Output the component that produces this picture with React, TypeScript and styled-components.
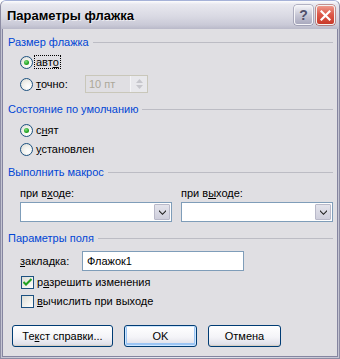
import React from 'react';
import styled, { createGlobalStyle } from 'styled-components';

const Global = createGlobalStyle`
  html, body {
    margin: 0;
    padding: 0;
    background: #ffffff;
  }
  body {
    font-family: "Liberation Sans", Arial, sans-serif;
    font-size: 11px;
    color: #000000;
  }
`;

const Window = styled.div`
  width: 340px;
  height: 359px;
  box-sizing: border-box;
  display: flex;
  flex-direction: column;
  background: linear-gradient(90deg, #c4c4d2 0%, #e6e6ee 40%, #e6e6ee 60%, #c4c4d2 100%);
  border: 1px solid #8d8da4;
  border-top-color: #a6b2d8;
  border-radius: 6px 6px 0 0;
  overflow: hidden;
`;

const TitleBar = styled.div`
  height: 28px;
  flex: none;
  display: flex;
  align-items: center;
  padding: 0 4px 0 6px;
  background: linear-gradient(180deg, #fdfdfe 0%, #e8e8ef 12%, #d9d9e3 55%, #cacad7 85%, #b9b9c9 100%);
`;

const Title = styled.div`
  flex: 1;
  font-family: "Liberation Sans", Arial, sans-serif;
  font-weight: bold;
  font-size: 13px;
  color: #000000;
  text-shadow: 1px 1px 0 rgba(255, 255, 255, 0.6);
  padding-top: 1px;
`;

const CaptionButton = styled.div<{ $kind: 'help' | 'close' }>`
  width: 19px;
  height: 20px;
  box-sizing: border-box;
  margin-left: 3px;
  border-radius: 3px;
  display: flex;
  align-items: center;
  justify-content: center;
  border: 1px solid ${(p) => (p.$kind === 'close' ? '#f3f3f3' : '#f6f6f9')};
  box-shadow: 0 0 0 0.5px ${(p) => (p.$kind === 'close' ? '#9a3a30' : '#7c7c96')};
  background: ${(p) =>
    p.$kind === 'close'
      ? 'linear-gradient(180deg, #ee9a8c 0%, #dd5a4a 45%, #c93a2a 100%)'
      : 'linear-gradient(180deg, #f2f2f6 0%, #c8c8d6 50%, #a9a9be 100%)'};
  color: ${(p) => (p.$kind === 'close' ? '#ffffff' : '#50506a')};
  font-weight: bold;
  font-size: 14px;
`;

const Client = styled.div`
  flex: 1;
  margin: 0 1px 1px 1px;
  border: 1px solid #8585a0;
  border-top: none;
  background: #e0dfe3;
  display: flex;
  flex-direction: column;
  padding: 6px 4px 0 5px;
`;

const GroupHeader = styled.div<{ $gap: number }>`
  height: 14px;
  margin-top: ${(p) => p.$gap}px;
  display: flex;
  align-items: center;
  gap: 4px;
  color: #0046d5;
  white-space: nowrap;
  &::after {
    content: '';
    flex: 1;
    height: 1px;
    background: #bcbcc4;
  }
`;

const Row = styled.div<{ $gap: number; $h?: number; $indent?: number }>`
  height: ${(p) => p.$h ?? 14}px;
  margin-top: ${(p) => p.$gap}px;
  padding-left: ${(p) => p.$indent ?? 0}px;
  display: flex;
  align-items: center;
  white-space: nowrap;
`;

const FixedLabel = styled.span<{ $w: number }>`
  width: ${(p) => p.$w}px;
  flex: none;
`;

const Radio = styled.span<{ $on?: boolean }>`
  width: 13px;
  height: 13px;
  box-sizing: border-box;
  border-radius: 50%;
  border: 1px solid #1c5180;
  background: radial-gradient(circle at 65% 70%, #ffffff 0%, #f2f2ee 45%, #d8d8d0 100%);
  display: flex;
  align-items: center;
  justify-content: center;
  margin-right: 3px;
  flex: none;
  &::after {
    content: '';
    display: ${(p) => (p.$on ? 'block' : 'none')};
    width: 5px;
    height: 5px;
    border-radius: 50%;
    background: radial-gradient(circle at 40% 35%, #7fe27f 0%, #21a121 60%, #1a8a1a 100%);
  }
`;

const Check = styled.span`
  width: 13px;
  height: 13px;
  box-sizing: border-box;
  border: 1px solid #1c5180;
  background: linear-gradient(135deg, #dcdcd6 0%, #f2f2ee 60%, #ffffff 100%);
  display: flex;
  align-items: center;
  justify-content: center;
  margin-right: 3px;
  flex: none;
`;

const Focus = styled.span`
  outline: 1px dotted #000000;
  outline-offset: 0px;
  padding: 0 1px;
  margin-left: -1px;
`;

const U = styled.span`
  text-decoration: underline;
  text-underline-offset: 1px;
`;

const Spinner = styled.div`
  width: 63px;
  height: 18px;
  box-sizing: border-box;
  border: 1px solid #c9c7ba;
  background: #e0dfe3;
  color: #aca899;
  display: flex;
  align-items: center;
  padding-left: 3px;
`;

const SpinValue = styled.span`
  flex: 1;
`;

const SpinButtons = styled.div`
  width: 16px;
  height: 100%;
  display: flex;
  flex-direction: column;
  align-items: center;
  justify-content: center;
  gap: 2px;
  background: #e8e8ec;
  border-left: 1px solid #f4f4f6;
`;

const Columns = styled.div<{ $gap: number }>`
  display: grid;
  grid-template-columns: 152px 152px;
  column-gap: 9px;
  margin-top: ${(p) => p.$gap}px;
  padding-left: 12px;
`;

const Field = styled.div`
  display: flex;
  flex-direction: column;
  gap: 2px;
`;

const Label = styled.div`
  height: 14px;
  display: flex;
  align-items: center;
  white-space: nowrap;
`;

const Combo = styled.div`
  height: 20px;
  box-sizing: border-box;
  border: 1px solid #7f9db9;
  background: #ffffff;
  display: flex;
  justify-content: flex-end;
  padding: 1px;
`;

const ComboButton = styled.div`
  width: 16px;
  box-sizing: border-box;
  border: 1px solid #b9b9c9;
  border-radius: 1px;
  background: linear-gradient(180deg, #e4e4ec 0%, #cfcfdc 100%);
  display: flex;
  align-items: center;
  justify-content: center;
`;

const TextInput = styled.div`
  width: 162px;
  height: 20px;
  box-sizing: border-box;
  border: 1px solid #7f9db9;
  background: #ffffff;
  padding-left: 4px;
  display: flex;
  align-items: center;
`;

const ButtonBar = styled.div`
  display: flex;
  align-items: center;
  margin-top: 17px;
  padding-left: 4px;
`;

const Button = styled.div<{ $w: number; $default?: boolean }>`
  width: ${(p) => p.$w}px;
  height: 22px;
  box-sizing: border-box;
  border: 1px solid #003c74;
  border-radius: 3px;
  background: linear-gradient(180deg, #ffffff 0%, #f4f4f8 55%, #e2e2ea 90%, #d2d2dc 100%);
  box-shadow: ${(p) =>
    p.$default ? 'inset 0 0 0 1px #cee7ff, inset 0 -1px 0 2px #9cc5f4' : 'inset 0 -1px 0 0 #d6d0c5'};
  display: flex;
  align-items: center;
  justify-content: center;
  white-space: nowrap;
  margin-left: ${(p) => (p.$default ? 'auto' : '0')};
  & + & {
    margin-left: 11px;
  }
`;

const Chevron = ({ color = '#222222' }: { color?: string }) => (
  <svg width="7" height="5" viewBox="0 0 7 5">
    <path d="M0 0 L3.5 3.5 L7 0 L7 1.5 L3.5 5 L0 1.5 Z" fill={color} />
  </svg>
);

export default function App() {
  return (
    <>
      <Global />
      <Window>
        <TitleBar>
          <Title>Параметры флажка</Title>
          <CaptionButton $kind="help">?</CaptionButton>
          <CaptionButton $kind="close">
            <svg width="11" height="11" viewBox="0 0 11 11">
              <path d="M1.5 1.5 L9.5 9.5 M9.5 1.5 L1.5 9.5" stroke="#ffffff" strokeWidth="2.2" strokeLinecap="square" />
            </svg>
          </CaptionButton>
        </TitleBar>
        <Client>
          <GroupHeader $gap={0}>Размер флажка</GroupHeader>
          <Row $gap={6} $indent={12}>
            <Radio $on />
            <Focus>
              авт<U>о</U>
            </Focus>
          </Row>
          <Row $gap={6} $h={18} $indent={12}>
            <Radio />
            <FixedLabel $w={49}>
              <U>т</U>очно:
            </FixedLabel>
            <Spinner>
              <SpinValue>10 пт</SpinValue>
              <SpinButtons>
                <svg width="7" height="4" viewBox="0 0 7 4">
                  <path d="M0 4 L3.5 0 L7 4 Z" fill="#c6c6cc" />
                </svg>
                <svg width="7" height="4" viewBox="0 0 7 4">
                  <path d="M0 0 L3.5 4 L7 0 Z" fill="#c6c6cc" />
                </svg>
              </SpinButtons>
            </Spinner>
          </Row>
          <GroupHeader $gap={9}>Состояние по умолчанию</GroupHeader>
          <Row $gap={7} $indent={12}>
            <Radio $on />
            <span>
              с<U>н</U>ят
            </span>
          </Row>
          <Row $gap={5} $indent={12}>
            <Radio />
            <span>
              <U>у</U>становлен
            </span>
          </Row>
          <GroupHeader $gap={9}>Выполнить макрос</GroupHeader>
          <Columns $gap={7}>
            <Field>
              <Label>
                при в<U>х</U>оде:
              </Label>
              <Combo>
                <ComboButton>
                  <Chevron />
                </ComboButton>
              </Combo>
            </Field>
            <Field>
              <Label>
                при в<U>ы</U>ходе:
              </Label>
              <Combo>
                <ComboButton>
                  <Chevron />
                </ComboButton>
              </Combo>
            </Field>
          </Columns>
          <GroupHeader $gap={9}>Параметры поля</GroupHeader>
          <Row $gap={6} $h={20} $indent={12}>
            <FixedLabel $w={62}>
              <U>з</U>акладка:
            </FixedLabel>
            <TextInput>Флажок1</TextInput>
          </Row>
          <Row $gap={4} $indent={13}>
            <Check>
              <svg width="9" height="9" viewBox="0 0 9 9">
                <path d="M0.5 4 L3 6.5 L8.5 1" stroke="#21a121" strokeWidth="2" fill="none" />
              </svg>
            </Check>
            <span>
              р<U>а</U>зрешить изменения
            </span>
          </Row>
          <Row $gap={5} $indent={13}>
            <Check />
            <span>
              <U>в</U>ычислить при выходе
            </span>
          </Row>
          <ButtonBar>
            <Button $w={101}>
              Те<U>к</U>ст справки...
            </Button>
            <Button $w={73} $default>
              OK
            </Button>
            <Button $w={73}>Отмена</Button>
          </ButtonBar>
        </Client>
      </Window>
    </>
  );
}
